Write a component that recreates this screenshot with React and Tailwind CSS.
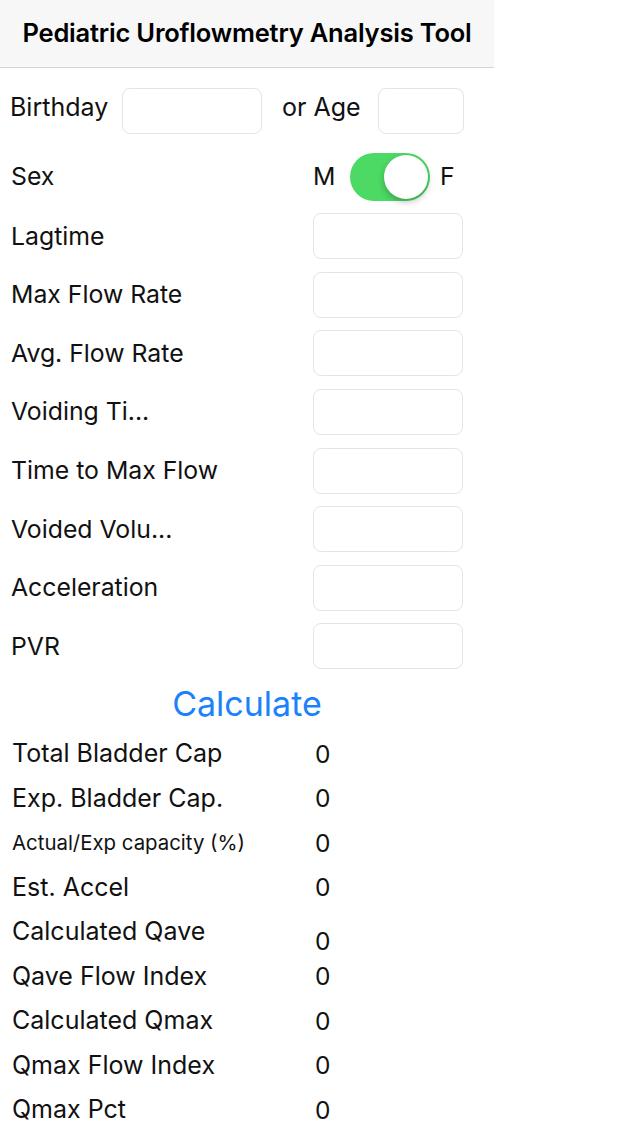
import React from 'react';

const font = { fontFamily: 'Inter, "Noto Sans", sans-serif' };

const fields = [
    'Lagtime',
    'Max Flow Rate',
    'Avg. Flow Rate',
    'Voiding Ti...',
    'Time to Max Flow',
    'Voided Volu...',
    'Acceleration',
    'PVR',
];

const results = [
    { label: 'Total Bladder Cap' },
    { label: 'Exp. Bladder Cap.' },
    { label: 'Actual/Exp capacity (%)', small: true },
    { label: 'Est. Accel' },
    { label: 'Calculated Qave', split: true },
    { label: 'Qave Flow Index' },
    { label: 'Calculated Qmax' },
    { label: 'Qmax Flow Index' },
    { label: 'Qmax Pct' },
];

const Box = ({ className }) => (
    <div className={`h-[46px] rounded-[8px] border border-[#e4e4e6] bg-white ${className}`}></div>
);

const App = () => {
    return (
        <div className="w-[639px] min-h-[1136px] bg-white text-[#111]" style={font}>
            <div className="w-[494px]">
                <div className="h-[68px] bg-[#f7f7f8] border-b border-[#d4d4d6] flex items-center justify-center">
                    <h1 className="text-[25.5px] font-semibold tracking-[-0.2px] text-black">Pediatric Uroflowmetry Analysis Tool</h1>
                </div>

                <div className="h-[86px] flex items-center pl-[10px] text-[25px]">
                    <span className="w-[112px] -translate-y-[3px]">Birthday</span>
                    <Box className="w-[140px]" />
                    <span className="ml-[20px] w-[96px] -translate-y-[3px]">or Age</span>
                    <Box className="w-[86px]" />
                </div>

                <div className="h-[45px] flex items-center pl-[11px] text-[24.8px]">
                    <span className="w-[302px]">Sex</span>
                    <span className="w-[37px]">M</span>
                    <div className="relative w-[80px] h-[48px] rounded-full bg-[#4cd964]">
                        <div className="absolute right-[2px] top-[2px] w-[44px] h-[44px] rounded-full bg-white shadow-[0_3px_6px_rgba(0,0,0,0.25)]"></div>
                    </div>
                    <span className="ml-[10px]">F</span>
                </div>

                <div className="pt-[8px]">
                    {fields.map((f) => (
                        <div key={f} className="h-[58.6px] flex items-center pl-[11px] text-[24.8px]">
                            <span className="w-[302px]">{f}</span>
                            <Box className="w-[150px]" />
                        </div>
                    ))}
                </div>

                <div className="h-[56px] flex items-center justify-center">
                    <span className="text-[34px] text-[#1a82fb]">Calculate</span>
                </div>

                <div>
                    {results.map((r) => (
                        <div key={r.label} className="h-[44.5px] flex items-center pl-[12px]">
                            <span className={`w-[303px] ${r.small ? 'text-[20.4px]' : 'text-[25px]'}`}>{r.label}</span>
                            <span className={`text-[24.5px] ${r.split ? 'translate-y-[9px]' : ''}`}>0</span>
                        </div>
                    ))}
                </div>
            </div>
        </div>
    );
};

export default App;
